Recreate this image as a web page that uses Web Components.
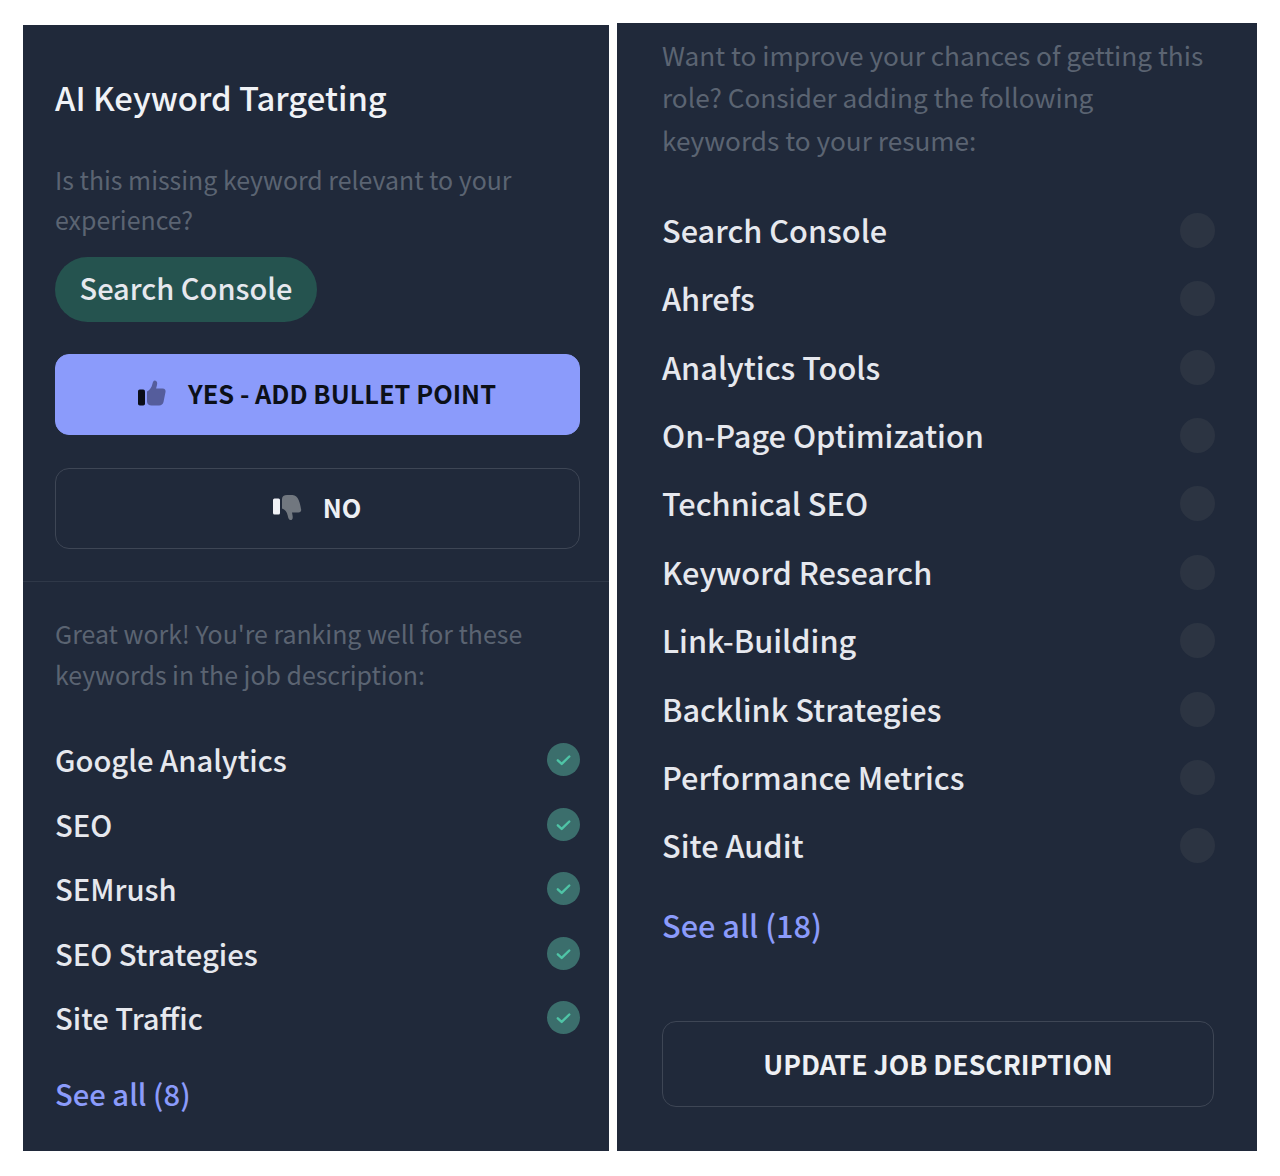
<!DOCTYPE html>
<html><head><meta charset="utf-8"><title>AI Keyword Targeting</title>
<style>
html,body{margin:0;padding:0;background:#fff}
body{font-family:"Noto Sans CJK SC","Noto Sans CJK JP",sans-serif;width:1280px;height:1176px;overflow:hidden}
</style></head><body>
<template id="t-check"><style>:host{display:block;width:33px;height:33px}svg{display:block}</style>
<svg width="33" height="33" viewBox="0 0 33 33"><circle cx="16.5" cy="16.5" r="16.5" fill="#3b6e6c"/><path d="M10.8 17.3l3.9 3.6 7.6-7.4" fill="none" stroke="#4fc4a6" stroke-width="2.4" stroke-linecap="round" stroke-linejoin="round"/></svg></template>

<kw-app></kw-app>

<script>
class KwRow extends HTMLElement{
  constructor(){super();const s=this.attachShadow({mode:'open'});
    s.innerHTML=`<style>
      :host{display:flex;align-items:center;justify-content:space-between;height:var(--row-h,64.5px);color:#e6e8ee;font-size:var(--kw-size,29.2px);line-height:40px;font-weight:500;letter-spacing:0}
      .dot{flex:none;width:35px;height:35px;border-radius:50%;background:#2c3442}
      .txt{position:relative;top:var(--txt-y,-.5px)}
      </style><span class="txt"><slot></slot></span><span id="m"></span>`;
    const m=s.getElementById('m');
    if(this.hasAttribute('checked')){m.appendChild(document.createElement('kw-check'))}
    else{m.className='dot'}
  }
}
class KwCheck extends HTMLElement{
  constructor(){super();this.attachShadow({mode:'open'}).appendChild(document.getElementById('t-check').content.cloneNode(true))}
}
class KwBtn extends HTMLElement{
  constructor(){super();const s=this.attachShadow({mode:'open'});
    s.innerHTML=`<style>
      :host{display:flex;align-items:center;justify-content:center;box-sizing:border-box;width:100%;height:81px;border-radius:14px;border:1.5px solid #3e4655;color:#eef0f4;font-size:var(--btn-size,25.4px);font-weight:700;gap:21px;padding:0 var(--btn-pr,2px) var(--btn-pb,3px) 0}
      :host([primary]){background:#8b9bfb;border-color:#8b9bfb;color:#0c1018}
      </style><slot name="icon"></slot><slot></slot>`;
  }
}
class KwLink extends HTMLElement{
  constructor(){super();this.attachShadow({mode:'open'}).innerHTML=`<style>:host{display:block;color:#8b9bfb;font-size:var(--kw-size,29.2px);line-height:40px;font-weight:500}</style><slot></slot>`}
}
class KwNote extends HTMLElement{
  constructor(){super();this.attachShadow({mode:'open'}).innerHTML=`<style>:host{display:block;color:#5b6472;font-size:var(--note-size,24.9px);line-height:var(--note-lh,40.5px);font-weight:400}</style><slot></slot>`}
}
class KwChip extends HTMLElement{
  constructor(){super();this.attachShadow({mode:'open'}).innerHTML=`<style>:host{display:inline-flex;align-items:center;box-sizing:border-box;height:65px;padding:0 25px 6px 24.500px;border-radius:33px;background:#25534f;color:#e6e8ee;font-size:29px;font-weight:500}</style><slot></slot>`}
}
class KwLeft extends HTMLElement{
  constructor(){super();this.attachShadow({mode:'open'}).innerHTML=`<style>
    :host{display:block;box-sizing:border-box;width:586px;height:1126px;margin:25px 0 0 23px;background:#20293a;flex:none}
    h1{margin:0;padding:48px 29px 0 32px;height:85.500px;font-size:32.800px;line-height:48px;font-weight:500;color:#f0f2f6}
    .top{padding:0 29px 32px 32px;border-bottom:1px solid #2f3848}
    .chip{margin:17.500px 0 32px}
    .no{margin-top:33px}
    .bot{padding:31px 29px 0 32px}
    .rows{margin-top:33.500px}
    .link{margin-top:23px}
    svg{display:block;flex:none}
    </style>
    <h1>AI Keyword Targeting</h1>
    <div class="top">
      <kw-note>Is this missing keyword relevant to your experience?</kw-note>
      <div class="chip"><kw-chip>Search Console</kw-chip></div>
      <kw-btn primary><svg slot="icon" width="30" height="28" viewBox="0 0 30 28"><rect x="1" y="10.500" width="7" height="16" rx="1.800" fill="#0b0e1a"/><path d="M10 12.500c2.800-1.200 4.600-4 5.400-7.500.5-2.200 1-3.500 2.500-3.500 2 0 2.700 2.300 2.100 4.500l-.9 3.500h6.600c2 0 3.300 1.600 2.800 3.500l-2 10c-.5 2.200-2.200 3.500-4.300 3.500H14.500c-2.500 0-4.500-1.500-4.500-4z" fill="#555d9c"/></svg>YES - ADD BULLET POINT</kw-btn>
      <div class="no"><kw-btn><svg slot="icon" width="30" height="28" viewBox="0 0 30 28"><rect x="1" y="5.500" width="7" height="16" rx="1.500" fill="#f0f2f6"/><path d="M10 15.500c3 1 5 3.500 5.700 7 .4 2.500 1.300 4.500 2.900 4.500 1.900 0 2.400-2 2-4.200l-.6-3.300h6.500c2 0 3.200-1.600 2.500-3.500C28 10.500 26.500 2 20.500 2H15C12 2 10 3.500 10 6z" fill="#71777f"/></svg>NO</kw-btn></div>
    </div>
    <div class="bot">
      <kw-note>Great work! You're ranking well for these keywords in the job description:</kw-note>
      <div class="rows">
        <kw-row checked>Google Analytics</kw-row>
        <kw-row checked>SEO</kw-row>
        <kw-row checked>SEMrush</kw-row>
        <kw-row checked>SEO Strategies</kw-row>
        <kw-row checked>Site Traffic</kw-row>
      </div>
      <div class="link"><kw-link>See all (8)</kw-link></div>
    </div>`}
}
class KwRight extends HTMLElement{
  constructor(){super();this.attachShadow({mode:'open'}).innerHTML=`<style>
    :host{display:block;box-sizing:border-box;width:640px;height:1128px;margin:23px 0 0 8px;padding:10.800px 43px 0 45px;background:#20293a;flex:none;--row-h:68.400px;--kw-size:30.700px;--note-size:26.200px;--note-lh:42.600px;--txt-y:-.5px;--btn-size:26.600px;--btn-pr:0px;--btn-pb:0px}
    .rows{margin:34.600px -1px 0 0}
    .link{margin-top:24.500px}
    .btn{margin-top:76px}
    kw-btn{height:86px}
    </style>
    <kw-note>Want to improve your chances of getting this role? Consider adding the following keywords to your resume:</kw-note>
    <div class="rows">
      <kw-row>Search Console</kw-row><kw-row>Ahrefs</kw-row><kw-row>Analytics Tools</kw-row><kw-row>On-Page Optimization</kw-row><kw-row>Technical SEO</kw-row><kw-row>Keyword Research</kw-row><kw-row>Link-Building</kw-row><kw-row>Backlink Strategies</kw-row><kw-row>Performance Metrics</kw-row><kw-row>Site Audit</kw-row>
    </div>
    <div class="link"><kw-link>See all (18)</kw-link></div>
    <div class="btn"><kw-btn>UPDATE JOB DESCRIPTION</kw-btn></div>`}
}
class KwApp extends HTMLElement{
  constructor(){super();this.attachShadow({mode:'open'}).innerHTML=`<style>:host{display:flex;align-items:flex-start}</style><kw-left></kw-left><kw-right></kw-right>`}
}
customElements.define('kw-check',KwCheck);
customElements.define('kw-row',KwRow);
customElements.define('kw-btn',KwBtn);
customElements.define('kw-link',KwLink);
customElements.define('kw-note',KwNote);
customElements.define('kw-chip',KwChip);
customElements.define('kw-left',KwLeft);
customElements.define('kw-right',KwRight);
customElements.define('kw-app',KwApp);
</script>
</body></html>
